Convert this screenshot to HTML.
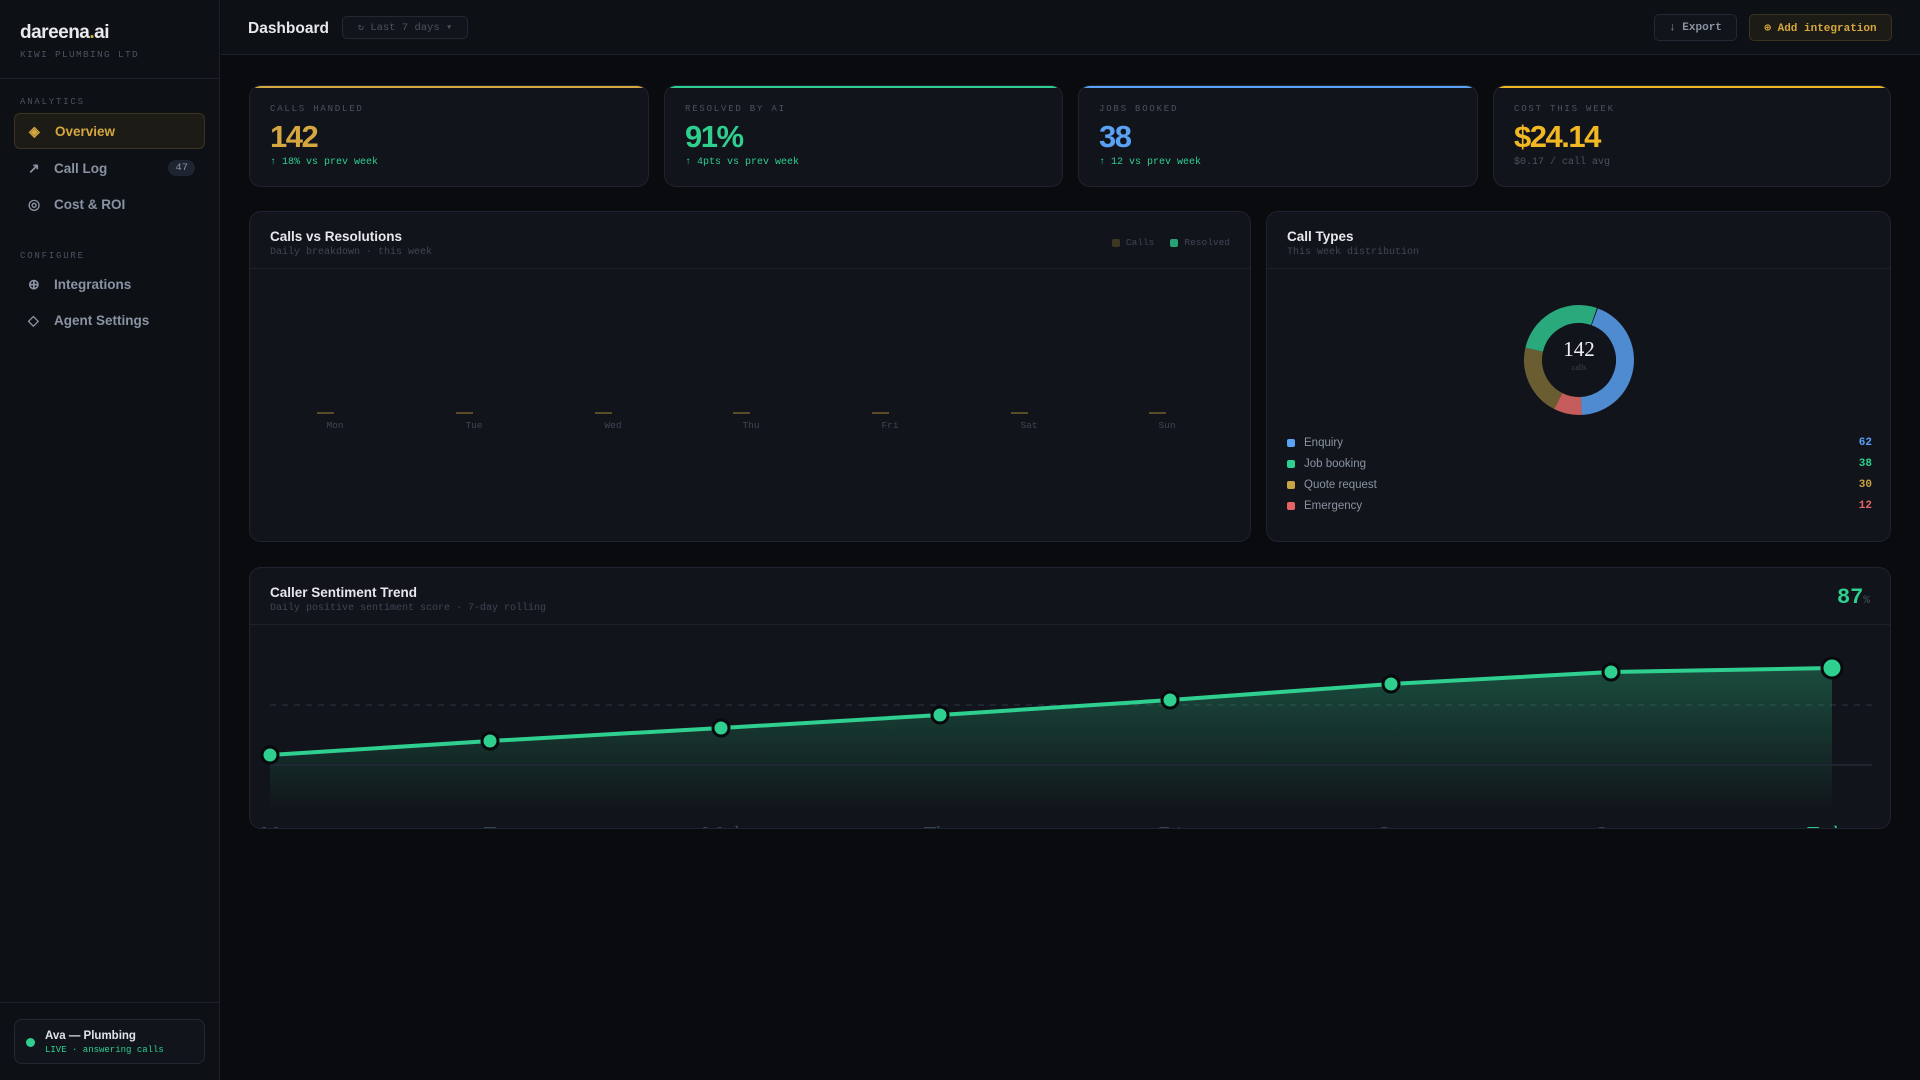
<!DOCTYPE html>
<html><head><meta charset="utf-8"><style>
*{box-sizing:border-box;margin:0;padding:0}
body{width:1920px;height:1080px;background:#090b0f;font-family:"Liberation Sans",sans-serif;color:#e6e8ec;position:relative;overflow:hidden}
.mono{font-family:"Liberation Mono",monospace}
.side{position:absolute;left:0;top:0;width:220px;height:1080px;background:#0d1015;border-right:1px solid #1c212b}
.logo{position:absolute;left:20px;top:22px;font-size:19px;font-weight:bold;letter-spacing:-0.5px;color:#e8eaee}
.logo span{color:#d4a73f}
.org{position:absolute;left:20px;top:49px;font-size:9.5px;letter-spacing:1.3px;color:#4a5261}
.sep{position:absolute;left:0;width:220px;height:1px;background:#1c212b}
.sec{position:absolute;left:20px;font-size:9px;letter-spacing:1.8px;color:#4a5261}
.nav{position:absolute;left:14px;width:191px;height:36px;display:flex;align-items:center;padding-left:14px;font-size:13.5px;font-weight:bold;color:#8a93a3}
.nav i{font-style:normal;width:26px;font-size:14px}
.nav.act{background:#1d1b15;border:1px solid #3b3320;border-radius:6px;color:#d4a73f}
.badge{position:absolute;right:10px;top:10px;background:#1e2430;color:#8a93a3;font-family:"Liberation Mono",monospace;font-size:10.5px;padding:2px 7px;border-radius:8px;font-weight:normal}
.agent{position:absolute;left:14px;top:1019px;width:191px;height:45px;border:1px solid #232834;border-radius:8px;background:#11141a}
.top{position:absolute;left:221px;top:0;right:0;height:55px;background:#0d1015;border-bottom:1px solid #1c212b}
.btn{position:absolute;top:14px;height:27px;border-radius:5px;font-family:"Liberation Mono",monospace;font-size:11px;font-weight:bold;display:flex;align-items:center;justify-content:center}
.card{position:absolute;background:#11141a;border:1px solid #1e2330;border-radius:12px;overflow:hidden}
.stat{top:85px;height:102px}
.stat .bar{position:absolute;left:0;top:0;right:0;height:2px}
.stat .l{position:absolute;left:20px;top:18px;font-family:"Liberation Mono",monospace;font-size:9px;letter-spacing:1.8px;color:#4a5261}
.stat .v{position:absolute;left:20px;top:33px;font-size:31px;font-weight:bold;letter-spacing:-1.5px}
.stat .s{position:absolute;left:20px;top:71px;font-family:"Liberation Mono",monospace;font-size:10px;color:#2fcf90}
.ph{position:absolute;left:0;right:0;top:0;height:57px;border-bottom:1px solid #1c212b}
.pt{position:absolute;left:20px;top:17px;font-size:13.5px;font-weight:bold;color:#e6e8ec}
.ps{position:absolute;left:20px;top:35px;font-family:"Liberation Mono",monospace;font-size:10px;color:#3e4655}
.dl{position:absolute;font-family:"Liberation Mono",monospace;font-size:9.5px;color:#3e4655;width:60px;text-align:center}
.bk{position:absolute;width:17px;height:2px;background:#5a4c25}
.lg{position:absolute;left:20px;font-size:11.5px;color:#8a93a3;display:flex;align-items:center;width:585px}
.lg b{width:8px;height:8px;border-radius:2px;margin-right:9px;display:inline-block}
.lg span{position:absolute;right:0;font-family:"Liberation Mono",monospace;font-weight:bold;font-size:11px}
</style></head><body>
<div class="side">
<div class="logo">dareena<span>.</span>ai</div>
<div class="org mono">KIWI PLUMBING LTD</div>
<div class="sep" style="top:78px"></div>
<div class="sec mono" style="top:97px">ANALYTICS</div>
<div class="nav act" style="top:113px"><i>◈</i>Overview</div>
<div class="nav" style="top:150px"><i>↗</i>Call Log<span class="badge">47</span></div>
<div class="nav" style="top:186px"><i>◎</i>Cost &amp; ROI</div>
<div class="sec mono" style="top:251px">CONFIGURE</div>
<div class="nav" style="top:266px"><i>⊕</i>Integrations</div>
<div class="nav" style="top:302px"><i>◇</i>Agent Settings</div>
<div class="sep" style="top:1002px"></div>
<div class="agent">
<div style="position:absolute;left:11px;top:18px;width:9px;height:9px;border-radius:50%;background:#2fcf90"></div>
<div style="position:absolute;left:30px;top:10px;font-size:11.5px;font-weight:bold;color:#e0e3e8">Ava — Plumbing</div>
<div class="mono" style="position:absolute;left:30px;top:25px;font-size:9px;color:#2fcf90">LIVE · answering calls</div>
</div>
</div>
<div class="top">
<div style="position:absolute;left:27px;top:20px;font-size:15.5px;font-weight:bold">Dashboard</div>
<div class="mono" style="position:absolute;left:121px;top:16px;width:126px;height:23px;border:1px solid #232834;border-radius:5px;background:#11141a;font-size:10.5px;color:#4a5261;display:flex;align-items:center;justify-content:center">↻ Last 7 days ▾</div>
<div class="btn" style="left:1433px;width:83px;border:1px solid #232834;background:#11141a;color:#8a93a3">↓ Export</div>
<div class="btn" style="left:1528px;width:143px;border:1px solid #3b3320;background:#1d1b15;color:#d4a73f">⊕ Add integration</div>
</div>

<div class="card stat" style="left:249px;width:400px"><div class="bar" style="background:#d4a73f"></div><div class="l">CALLS HANDLED</div><div class="v" style="color:#d4a73f">142</div><div class="s">↑ 18% vs prev week</div></div>
<div class="card stat" style="left:664px;width:399px"><div class="bar" style="background:#2fcf90"></div><div class="l">RESOLVED BY AI</div><div class="v" style="color:#2fcf90">91%</div><div class="s">↑ 4pts vs prev week</div></div>
<div class="card stat" style="left:1078px;width:400px"><div class="bar" style="background:#5aa2f5"></div><div class="l">JOBS BOOKED</div><div class="v" style="color:#5aa2f5">38</div><div class="s">↑ 12 vs prev week</div></div>
<div class="card stat" style="left:1493px;width:398px"><div class="bar" style="background:#f2b824"></div><div class="l">COST THIS WEEK</div><div class="v" style="color:#f2b824">$24.14</div><div class="s" style="color:#4a5261">$0.17 / call avg</div></div>

<div class="card" style="left:249px;top:211px;width:1002px;height:331px">
<div class="ph"><div class="pt">Calls vs Resolutions</div><div class="ps">Daily breakdown · this week</div>
<div class="mono" style="position:absolute;right:20px;top:25px;font-size:9.5px;color:#3e4655;display:flex;align-items:center"><b style="width:8px;height:8px;border-radius:2px;background:#3d3620;margin-right:6px;display:inline-block"></b>Calls<b style="width:8px;height:8px;border-radius:2px;background:#27a276;margin:0 6px 0 16px;display:inline-block"></b>Resolved</div></div>
<div class="bk" style="left:67px;top:200px"></div><div class="dl" style="left:55px;top:208px">Mon</div>
<div class="bk" style="left:206px;top:200px"></div><div class="dl" style="left:194px;top:208px">Tue</div>
<div class="bk" style="left:345px;top:200px"></div><div class="dl" style="left:333px;top:208px">Wed</div>
<div class="bk" style="left:483px;top:200px"></div><div class="dl" style="left:471px;top:208px">Thu</div>
<div class="bk" style="left:622px;top:200px"></div><div class="dl" style="left:610px;top:208px">Fri</div>
<div class="bk" style="left:761px;top:200px"></div><div class="dl" style="left:749px;top:208px">Sat</div>
<div class="bk" style="left:899px;top:200px"></div><div class="dl" style="left:887px;top:208px">Sun</div>
</div>

<div class="card" style="left:1266px;top:211px;width:625px;height:331px">
<div class="ph"><div class="pt">Call Types</div><div class="ps">This week distribution</div></div>
<svg style="position:absolute;left:0;top:0" width="625" height="331">
<g transform="translate(312,148)" fill="none" stroke-width="18">
<circle r="46" stroke="#4f8bd0" stroke-dasharray="126 1000" transform="rotate(-70)"/>
<circle r="46" stroke="#c45c5c" stroke-dasharray="24 1000" transform="rotate(87)"/>
<circle r="46" stroke="#6a5d31" stroke-dasharray="61 1000" transform="rotate(117)"/>
<circle r="46" stroke="#2aa97c" stroke-dasharray="77 1000" transform="rotate(193)"/>
</g>
<text x="312" y="144" text-anchor="middle" font-family="Liberation Serif,serif" font-size="21" fill="#eef0f3">142</text>
<text x="312" y="158" text-anchor="middle" font-family="Liberation Serif,serif" font-size="8" fill="#3e4655">calls</text>
</svg>
<div class="lg" style="top:225px"><b style="background:#5aa2f5"></b>Enquiry<span style="color:#5aa2f5">62</span></div>
<div class="lg" style="top:246px"><b style="background:#2fcf90"></b>Job booking<span style="color:#2fcf90">38</span></div>
<div class="lg" style="top:267px"><b style="background:#c9a443"></b>Quote request<span style="color:#c9a443">30</span></div>
<div class="lg" style="top:288px"><b style="background:#e86464"></b>Emergency<span style="color:#e86464">12</span></div>
</div>

<div class="card" style="left:249px;top:567px;width:1642px;height:262px">
<div class="ph"><div class="pt">Caller Sentiment Trend</div><div class="ps">Daily positive sentiment score · 7-day rolling</div>
<div class="mono" style="position:absolute;right:20px;top:17px;font-size:22px;font-weight:bold;color:#2fcf90">87<span style="font-size:11px;color:#4a5261;font-weight:normal">%</span></div></div>
<svg style="position:absolute;left:0;top:0" width="1642" height="262">
<defs><linearGradient id="g" x1="0" y1="0" x2="0" y2="1"><stop offset="0" stop-color="#2fcf90" stop-opacity="0.3"/><stop offset="1" stop-color="#2fcf90" stop-opacity="0"/></linearGradient></defs>
<line x1="20" y1="137" x2="1622" y2="137" stroke="#222a38" stroke-width="1.5" stroke-dasharray="6 6"/>
<path d="M20 187 L240 173 L471 160 L690 147 L920 132 L1141 116 L1361 104 L1582 100 L1582 245 L20 245Z" fill="url(#g)"/>
<line x1="20" y1="197" x2="1622" y2="197" stroke="#222a38" stroke-width="1.5"/>
<path d="M20 187 L240 173 L471 160 L690 147 L920 132 L1141 116 L1361 104 L1582 100" fill="none" stroke="#2fcf90" stroke-width="4"/>
<g fill="#2fcf90" stroke="#07090c" stroke-width="3">
<circle cx="20" cy="187" r="8"/><circle cx="240" cy="173" r="8"/><circle cx="471" cy="160" r="8"/><circle cx="690" cy="147" r="8"/><circle cx="920" cy="132" r="8"/><circle cx="1141" cy="116" r="8"/><circle cx="1361" cy="104" r="8"/><circle cx="1582" cy="100" r="10"/>
</g>
<g font-family="Liberation Serif,serif" font-size="20" fill="#3e4655" text-anchor="middle">
<text x="20" y="272">M</text><text x="240" y="272">T</text><text x="471" y="272">Wed</text><text x="690" y="272">Thu</text><text x="920" y="272">Fri</text><text x="1141" y="272">Sat</text><text x="1361" y="272">Sun</text><text x="1582" y="272" fill="#2fcf90">Today</text>
</g>
</svg>
</div>
</body></html>
